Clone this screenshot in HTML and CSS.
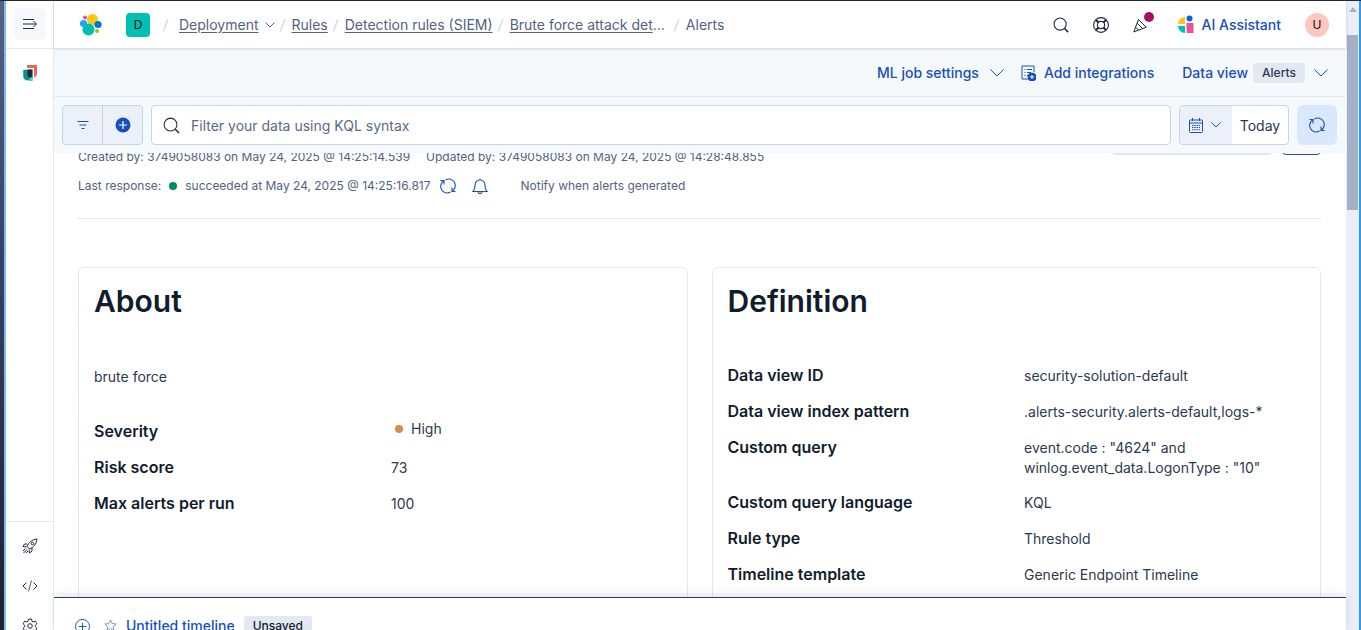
FILE: index.html
```html
<!DOCTYPE html>
<html lang="en">

<head>
    <meta charset="UTF-8" />
    <meta name="viewport" content="width=device-width, initial-scale=1.0" />
    <title>Alerts - Kibana</title>

    <link rel="stylesheet" href="styles.css">
</head>

<body>
    <div class="wallpaper"></div>

    <!-- SIDE NAV -->
    <nav class="sidenav">
        <div class="nav-top">
            <div class="nav-toggle">
                <svg width="16" height="16" viewBox="0 0 16 16" fill="none" stroke="#1d2a3e" stroke-width="1">
                    <path d="M1 3.500h11M1 8h13M1 12.500h11M11.500 5l3 3-3 3" />
                </svg>
            </div>
        </div>
        <div class="nav-app">
            <svg width="16" height="18" viewBox="0 0 16 18">
                <path d="M5 1h10v8.500c0 2-1 3.200-3 4V4H5z" fill="#f0674a" />
                <path d="M1 5.500h9.500V17L4 16.500C2 15.500 1 14 1 12z" fill="#0b8f89" stroke="#fff" stroke-width=".5" />
                <path d="M5.500 5.500h5v9L5.500 12.500z" fill="#1d2a3e" />
                <path d="M10.500 12v5l-3.500-1.500z" fill="#4fd6cc" />
            </svg>
        </div>
        <div class="nav-bottom">
            <svg width="16" height="16" viewBox="0 0 16 16" fill="none" stroke="#1d2a3e" stroke-width="1">
                <path d="M5 8.500C6.500 4.500 10 1.500 15 1c-.5 5-3.500 8.500-7.500 10z" />
                <circle cx="10.500" cy="5.500" r="1.300" />
                <path d="M5 6H2.500L1 8.500l3.500.5M10 9.500V13l-2.500 2-.5-3.500M3.500 10.500L1 13M5 11.500L1.500 15M6 13l-2 2" />
            </svg>
            <svg width="16" height="16" viewBox="0 0 16 16" fill="none" stroke="#1d2a3e" stroke-width="1">
                <path d="M4.500 4.500L1 8l3.500 3.500M11.500 4.500L15 8l-3.500 3.500" />
                <path d="M9.500 2.500l-3 11" stroke="#516381" />
            </svg>
            <svg width="16" height="16" viewBox="0 0 16 16" fill="none" stroke="#1d2a3e" stroke-width="1">
                <path d="M6.500 1h3l.5 2.200 1.300.7 2.100-.7 1.500 2.600-1.600 1.500v1.400l1.600 1.500-1.500 2.600-2.100-.7-1.300.7-.5 2.200h-3L6 12.800l-1.300-.7-2.100.7L1.100 10.200l1.600-1.500V7.300L1.100 5.800l1.500-2.600 2.100.7L6 3.200z" />
                <circle cx="8" cy="8" r="2.300" />
            </svg>
        </div>
    </nav>

    <div class="app">
        <!-- HEADER -->
        <header class="topbar">
            <svg class="elastic-logo" width="22" height="24" viewBox="0 0 22 24">
                <circle cx="12.500" cy="6.500" r="5.500" fill="#fec514" />
                <circle cx="8.500" cy="16.500" r="6" fill="#00bfb3" />
                <circle cx="5" cy="4.500" r="2" fill="#f04e98" />
                <circle cx="3.500" cy="10.500" r="3.600" fill="#1ba9f5" />
                <circle cx="18" cy="11.500" r="3.600" fill="#0077cc" />
                <circle cx="17" cy="18" r="2" fill="#93c90e" />
            </svg>
            <div class="space-badge">D</div>

            <ol class="crumbs">
                <li class="crumb-sep crumb-first">/</li>
                <li class="crumb-text crumb-link">Deployment</li>
                <li class="crumb-chevron">
                    <svg width="10" height="6" viewBox="0 0 10 6" fill="none" stroke="#516381"><path d="M.5.500L5 5 9.500.5" /></svg>
                </li>
                <li class="crumb-sep">/</li>
                <li class="crumb-text crumb-link">Rules</li>
                <li class="crumb-sep">/</li>
                <li class="crumb-text crumb-link">Detection rules (SIEM)</li>
                <li class="crumb-sep">/</li>
                <li class="crumb-text crumb-long"><span class="crumb-link">Brute force attack det</span>...</li>
                <li class="crumb-sep">/</li>
                <li class="crumb-text">Alerts</li>
            </ol>

            <div class="top-icons">
                <svg width="16" height="16" viewBox="0 0 18 18" fill="none" stroke="#1d2a3e" stroke-width="1.200">
                    <circle cx="8" cy="8" r="6.800" />
                    <path d="M13 13l4 4" stroke-width="1.800" />
                </svg>
                <svg width="16" height="16" viewBox="0 0 16 16" fill="none" stroke="#1d2a3e" stroke-width="1.100">
                    <circle cx="8" cy="8" r="7.400" />
                    <circle cx="8" cy="8" r="3.600" />
                    <path d="M2.800 2.800l2.700 2.700M13.200 2.800l-2.700 2.700M2.800 13.200l2.700-2.700M13.200 13.200l-2.700-2.700" stroke-width="2" />
                </svg>
                <div class="news">
                    <svg width="16" height="16" viewBox="0 0 16 16" fill="none" stroke="#1d2a3e" stroke-width="1">
                        <path d="M5.500 2.500L.8 15l12.400-4.700z" />
                        <path d="M4.200 6.200l5.600 5.600M2.700 10.200l3 3M6.800 3.800l4.800 4.800" />
                    </svg>
                    <span class="news-dot"></span>
                </div>
            </div>

            <div class="ai-assistant">
                <svg width="16" height="20" viewBox="0 0 16 20">
                    <path d="M0 9a7 7 0 0 1 7-7v7z" fill="#fec514" />
                    <path d="M0 11h7v7a7 7 0 0 1-7-7z" fill="#00bfb3" />
                    <circle cx="11.500" cy="3.500" r="3" fill="#0b64dd" />
                    <rect x="8.500" y="8" width="7" height="10" fill="#f04e98" />
                </svg>
                <span>AI Assistant</span>
            </div>
            <div class="avatar">U</div>
        </header>

        <!-- ACTIONS -->
        <div class="action-bar">
            <span>ML job settings</span>
            <svg class="chevron ml-chevron" width="14" height="8" viewBox="0 0 14 8" fill="none" stroke="#1750ba"><path d="M.5.500L7 7 13.500.5" /></svg>
            <svg class="integrations-icon" width="15" height="16" viewBox="0 0 15 16" fill="none" stroke="#1750ba">
                <path d="M13 7V1H1v13h6" />
                <path d="M3.500 4.500h1M6 4.500h5M3.500 7.500h1M6 7.500h4M3.500 10.500h1M6 10.500h1" />
                <circle cx="11" cy="12" r="4" fill="#1750ba" />
                <path d="M9 12h4M11 10v4" stroke="#fff" />
            </svg>
            <span class="integrations-label">Add integrations</span>
            <span class="data-view">Data view</span>
            <span class="alerts-badge">Alerts</span>
            <svg class="chevron" width="14" height="8" viewBox="0 0 14 8" fill="none" stroke="#1750ba"><path d="M.5.500L7 7 13.500.5" /></svg>
        </div>

        <!-- SEARCH -->
        <div class="search-bar">
            <div class="filter-group">
                <div class="filter-btn">
                    <svg width="12" height="8" viewBox="0 0 12 8" fill="none" stroke="#1750ba"><path d="M.5.500h11M2.500 4h7M4.500 7.500h3" /></svg>
                </div>
                <div class="filter-btn">
                    <svg width="16" height="16" viewBox="0 0 16 16">
                        <circle cx="8" cy="8" r="7.500" fill="#1750ba" />
                        <path d="M8 4v8M4 8h8" stroke="#fff" stroke-width="1.200" />
                    </svg>
                </div>
            </div>
            <div class="query-input">
                <svg width="17" height="17" viewBox="0 0 18 18" fill="none" stroke="#1d2a3e" stroke-width="1.100">
                    <circle cx="8" cy="8" r="6.800" />
                    <path d="M13 13l4 4" stroke-width="1.600" />
                </svg>
                <span class="query-placeholder">Filter your data using KQL syntax</span>
            </div>
            <div class="date-picker">
                <div class="date-btn">
                    <svg width="14" height="15" viewBox="0 0 14 15" fill="none" stroke="#1750ba">
                        <rect x=".5" y="2" width="13" height="12.500" rx="1" />
                        <path d="M.5 5h13M3.500 0v3M10.500 0v3" />
                        <path d="M3 7.500h8M3 9.500h8M3 11.700h8" stroke-dasharray="1.500 .8" />
                    </svg>
                    <svg width="10" height="6" viewBox="0 0 10 6" fill="none" stroke="#1750ba"><path d="M.5.500L5 5 9.500.5" /></svg>
                </div>
                <div class="date-value">Today</div>
            </div>
            <div class="refresh-btn">
                <svg width="16" height="16" viewBox="0 0 16 16" fill="none" stroke="#1750ba" stroke-width="1.100">
                    <path d="M5.500 1.900A6.500 6.500 0 0 1 12 13.200M12 9.500v4h3.500" />
                    <path d="M10.500 14.100A6.500 6.500 0 0 1 4 2.800M4 6.500v-4H.5" />
                </svg>
            </div>
        </div>

        <!-- RULE DETAILS (scrolled) -->
        <main class="content">
            <div class="rule-head">
                <div class="rule-meta">
                    <div class="meta-line">
                        <span>Created by: 3749058083 on May 24, 2025 @ 14:25:14.539</span>
                        <span>Updated by: 3749058083 on May 24, 2025 @ 14:28:48.855</span>
                    </div>
                    <div class="meta-line status-line">
                        <span>Last response:</span>
                        <i class="status-dot"></i>
                        <span>succeeded at May 24, 2025 @ 14:25:16.817</span>
                        <svg class="status-refresh" width="16" height="16" viewBox="0 0 16 16" fill="none" stroke="#1750ba" stroke-width="1.100">
                            <path d="M5.500 1.900A6.500 6.500 0 0 1 12 13.200M12 9.500v4h3.500" />
                            <path d="M10.500 14.100A6.500 6.500 0 0 1 4 2.800M4 6.500v-4H.5" />
                        </svg>
                        <svg class="bell" width="16" height="16" viewBox="0 0 16 16" fill="none" stroke="#1750ba" stroke-width="1.100">
                            <path d="M1 13.500h14c-1.500-1.500-2-3-2-6C13 4 11 2 8 2S3 4 3 7.500c0 3-.5 4.500-2 6zM8 .5V2M6 13.500a2 2 0 0 0 4 0" />
                        </svg>
                        <span class="notify">Notify when alerts generated</span>
                    </div>
                </div>
                <div class="rule-actions">
                    <div class="action-wide"></div>
                    <div class="action-small"></div>
                </div>
            </div>
            <hr class="divider" />

            <div class="cards">
                <section class="card">
                    <h2>About</h2>
                    <p class="description">brute force</p>
                    <dl class="details about-details">
                        <dt class="severity-label">Severity</dt>
                        <dd class="severity"><i class="severity-dot"></i>High</dd>
                        <dt>Risk score</dt>
                        <dd>73</dd>
                        <dt>Max alerts per run</dt>
                        <dd>100</dd>
                    </dl>
                </section>

                <section class="card">
                    <h2>Definition</h2>
                    <dl class="details definition-details">
                        <dt>Data view ID</dt>
                        <dd>security-solution-default</dd>
                        <dt>Data view index pattern</dt>
                        <dd>.alerts-security.alerts-default,logs-*</dd>
                        <dt>Custom query</dt>
                        <dd class="query-value">event.code : "4624" and<br>winlog.event_data.LogonType : "10"</dd>
                        <dt>Custom query language</dt>
                        <dd>KQL</dd>
                        <dt>Rule type</dt>
                        <dd>Threshold</dd>
                        <dt>Timeline template</dt>
                        <dd>Generic Endpoint Timeline</dd>
                    </dl>
                </section>
            </div>
        </main>

        <!-- TIMELINE -->
        <footer class="timeline-bar">
            <svg class="timeline-add" width="15" height="15" viewBox="0 0 16 16" fill="none" stroke="#1750ba">
                <circle cx="8" cy="8" r="7.500" />
                <path d="M8 4v8M4 8h8" />
            </svg>
            <svg class="star" width="13" height="13" viewBox="0 0 14 14" fill="none" stroke="#7c8aa3">
                <path d="M7 1l1.800 4 4.400.4-3.300 2.900 1 4.300L7 10.300l-3.900 2.300 1-4.300L.8 5.400 5.200 5z" />
            </svg>
            <span class="timeline-title">Untitled timeline</span>
            <span class="unsaved">Unsaved</span>
        </footer>
    </div>

    <!-- SCROLLBAR -->
    <div class="scrollbar">
        <div class="scroll-arrow"></div>
        <div class="scroll-thumb"></div>
    </div>
    <div class="window-edge"></div>
</body>

</html>
```

FILE: styles.css
```css
* {
    box-sizing: border-box;
}

body {
    margin: 0;
    height: 630px;
    overflow: hidden;
    display: flex;
    font-family: Inter, "Liberation Sans", sans-serif;
    font-size: 14px;
    line-height: 20px;
    color: #2b394f;
    background: #fff;
    border-top: 1px solid #25262e;
}

.wallpaper {
    width: 4px;
    flex: none;
    background: linear-gradient(#59617f, #3a4163 40%, #201f2e);
}

/* SIDE NAV */
.sidenav {
    width: 50px;
    flex: none;
    display: flex;
    flex-direction: column;
    border-left: 2px solid #74bcfb;
    border-right: 1px solid #e3e8f2;
}

.nav-top {
    height: 48px;
    display: flex;
    justify-content: center;
    align-items: center;
    border-bottom: 1px solid #e3e8f2;
    padding-bottom: 1px;
}

.nav-toggle {
    width: 32px;
    height: 32px;
    border-radius: 6px;
    background: #f6f9fc;
    display: flex;
    justify-content: center;
    align-items: center;
}

.nav-app {
    display: flex;
    justify-content: center;
    padding-top: 15px;
    flex: 1;
}

.nav-bottom {
    border-top: 1px solid #e3e8f2;
    height: 109px;
    flex: none;
    display: flex;
    flex-direction: column;
    align-items: center;
    gap: 24px;
    padding-top: 16px;
}

.nav-bottom svg {
    flex: none;
}

/* MAIN COLUMN */
.app {
    width: 1292px;
    flex: none;
    display: flex;
    flex-direction: column;
}

.topbar {
    height: 47px;
    flex: none;
    display: flex;
    align-items: center;
    background: #fff;
    padding-left: 26px;
    color: #516381;
    box-shadow: 0 1px 3px rgba(43, 57, 79, 0.2);
    position: relative;
}

.elastic-logo {
    margin-right: 24px;
}

.space-badge {
    width: 24px;
    height: 24px;
    border-radius: 4px;
    background: #00bfb3;
    color: #07101f;
    font-size: 12px;
    display: flex;
    justify-content: center;
    align-items: center;
}

.crumbs {
    list-style: none;
    margin: 0;
    padding: 0 0 0 11px;
    display: flex;
    align-items: center;
    flex: 1;
}

.crumb-link {
    text-decoration: underline;
    text-underline-offset: 2px;
}

.crumb-text {
    margin-right: 3px;
}

.crumb-long {
    margin-right: 7px;
}

.crumb-sep {
    color: #cad3e2;
    margin-right: 5px;
    width: 9px;
    text-align: center;
    transform: skewX(-6deg);
}

.crumb-first {
    margin-right: 9px;
}

.crumb-chevron {
    display: flex;
    margin: 0 3px 0 3px;
}

.top-icons {
    display: flex;
    align-items: center;
    gap: 24px;
    margin-right: 29px;
}

.news {
    position: relative;
    display: flex;
}

.news-dot {
    position: absolute;
    top: -5px;
    right: -5px;
    width: 10px;
    height: 10px;
    border-radius: 50%;
    background: #a6115f;
}

.ai-assistant {
    display: flex;
    align-items: center;
    gap: 8px;
    color: #1750ba;
    font-weight: 500;
    margin-right: 24px;
}

.avatar {
    width: 24px;
    height: 24px;
    border-radius: 50%;
    background: #ffc7bd;
    color: #07101f;
    font-size: 12px;
    display: flex;
    justify-content: center;
    align-items: center;
    margin-right: 17px;
}

.action-bar {
    height: 49px;
    flex: none;
    display: flex;
    justify-content: flex-end;
    align-items: center;
    padding: 1px 18px 0 0;
    background: #f6f9fc;
    border-bottom: 1px solid #e3e8f2;
    color: #1750ba;
    font-weight: 500;
}

.action-bar .chevron {
    margin-left: 9px;
}

.action-bar .ml-chevron {
    margin-left: 11px;
}

.integrations-icon {
    margin-left: 17px;
}

.integrations-label {
    margin-left: 8px;
}

.data-view {
    margin-left: 28px;
}

.alerts-badge {
    margin-left: 5px;
    width: 52px;
    height: 20px;
    border-radius: 3px;
    background: #e3e8f2;
    color: #2b394f;
    font-size: 12px;
    text-align: center;
}

.search-bar {
    height: 56px;
    flex: none;
    display: flex;
    align-items: flex-start;
    gap: 8px;
    padding: 8px 9px 0 8px;
    background: #f6f9fc;
}

.filter-group {
    display: flex;
    width: 81px;
    height: 40px;
    border: 1px solid #cad3e2;
    border-radius: 4px;
    background: #ecf1f9;
}

.filter-btn {
    flex: 1;
    display: flex;
    justify-content: center;
    align-items: center;
}

.filter-btn + .filter-btn {
    border-left: 1px solid #cad3e2;
}

.query-input {
    flex: 1;
    height: 40px;
    display: flex;
    align-items: center;
    gap: 11px;
    padding-left: 11px;
    background: #fff;
    border: 1px solid #cad3e2;
    border-radius: 4px;
    color: #5a6b85;
}

.query-placeholder {
    margin-top: 2px;
}

.date-picker {
    width: 110px;
    height: 40px;
    display: flex;
    border: 1px solid #cad3e2;
    border-radius: 4px;
    background: #fff;
    overflow: hidden;
}

.date-btn {
    width: 52px;
    display: flex;
    align-items: center;
    gap: 8px;
    padding-left: 9px;
    background: #ecf1f9;
}

.date-value {
    flex: 1;
    text-align: center;
    line-height: 40px;
}

.refresh-btn {
    width: 40px;
    height: 40px;
    border-radius: 6px;
    background: #d9e8ff;
    display: flex;
    justify-content: center;
    align-items: center;
}

/* CONTENT */
.content {
    flex: 1;
    min-height: 0;
    overflow: hidden;
    padding: 0 25px 0 24px;
    background: #fff;
}

.rule-head {
    display: flex;
    justify-content: space-between;
    align-items: flex-start;
    margin-top: -6px;
}

.meta-line {
    display: flex;
    align-items: center;
    gap: 16px;
    height: 20px;
    font-size: 12px;
    color: #516381;
}

.status-line {
    margin-top: 9px;
    gap: 8px;
}

.status-dot {
    width: 8px;
    height: 8px;
    border-radius: 50%;
    background: #008a5e;
}

.status-refresh {
    margin-left: 1px;
}

.bell {
    margin-left: 8px;
}

.notify {
    margin-left: 25px;
}

.rule-actions {
    display: flex;
    gap: 10px;
    margin-top: -32px;
}

.action-wide {
    width: 160px;
    height: 40px;
    border-radius: 4px;
    background: #d9e8ff;
}

.action-small {
    width: 39px;
    height: 40px;
    border: 1px solid #1750ba;
    border-radius: 4px;
}

.divider {
    border: 0;
    border-top: 1px solid #e3e8f2;
    margin: 22px 0 48px;
}

.cards {
    display: flex;
    gap: 24px;
}

.card {
    flex: 1;
    height: 420px;
    padding: 16px 15px;
    border: 1px solid #e3e8f2;
    border-radius: 6px;
}

.card h2 {
    margin: 0;
    font-size: 30px;
    line-height: 34px;
    font-weight: 600;
    color: #111c2c;
}

.description {
    margin: 49px 0 0;
}

.details {
    margin: 0;
    display: grid;
    row-gap: 16px;
}

.about-details {
    grid-template-columns: 297px 1fr;
    margin-top: 32px;
}

.definition-details {
    grid-template-columns: 296.5px 1fr;
    margin-top: 48px;
}

.details dt {
    margin-top: -1px;
    font-size: 16px;
    font-weight: 600;
    color: #111c2c;
}

.details dd {
    margin: 0;
}

.details .query-value {
    margin-bottom: -1px;
}

.details .severity-label {
    padding-top: 3px;
}

.details .severity {
    display: flex;
    align-items: center;
    gap: 8px;
    padding-left: 4px;
    height: 20px;
    margin-bottom: 3px;
}

.severity-dot {
    width: 8px;
    height: 8px;
    border-radius: 50%;
    background: #da8b45;
}

/* TIMELINE */
.timeline-bar {
    height: 33px;
    flex: none;
    display: flex;
    align-items: flex-start;
    padding: 20px 0 0 21px;
    background: #fff;
    border-top: 1px solid #2b394f;
    box-shadow: 0 -3px 8px rgba(43, 57, 79, 0.12);
    overflow: hidden;
    position: relative;
}

.timeline-add {
    margin-top: 1px;
}

.star {
    margin: 1px 0 0 14px;
}

.timeline-title {
    margin: -1px 0 0 9px;
    color: #1750ba;
    font-weight: 500;
    line-height: 18px;
}

.unsaved {
    margin: -2px 0 0 9px;
    padding: 0 9px;
    height: 20px;
    border-radius: 3px;
    background: #e3e8f2;
    color: #111c2c;
    font-size: 12px;
    font-weight: 500;
}

/* SCROLLBAR */
.scrollbar {
    width: 13px;
    flex: none;
    background: #e9eef8;
    display: flex;
    flex-direction: column;
    align-items: center;
}

.scroll-arrow {
    width: 0;
    height: 0;
    margin-top: 6px;
    border-left: 4px solid transparent;
    border-right: 4px solid transparent;
    border-bottom: 5px solid #a5b1c6;
}

.scroll-thumb {
    width: 11px;
    height: 175px;
    margin-top: 23px;
    background: #a3b0c5;
}

.window-edge {
    flex: 1;
    background: #2f9bf0;
}
```
